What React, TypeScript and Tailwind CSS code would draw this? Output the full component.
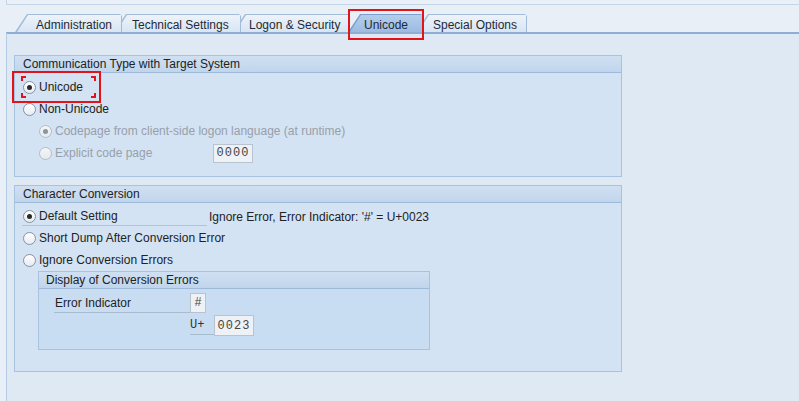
import clsx from "clsx";
import type { ReactNode } from "react";

const tabs = [
  { label: "Administration", w: "w-[107px]", pl: "pl-[20px]", ml: "ml-0", z: "z-50" },
  { label: "Technical Settings", w: "w-[127px]", pl: "pl-[17px]", ml: "-ml-[8px]", z: "z-40" },
  { label: "Logon & Security", w: "w-[117px]", pl: "pl-[15px]", ml: "-ml-[8px]", z: "z-30" },
  { label: "Unicode", w: "w-[75px]", pl: "pl-[15px]", ml: "-ml-[2px]", z: "z-[60]", active: true },
  { label: "Special Options", w: "w-[111px]", pl: "pl-[16px]", ml: "-ml-[7px]", z: "z-20" },
] as const;

function Tab({ t }: { t: (typeof tabs)[number] }) {
  const active = "active" in t && t.active;
  return (
    <div
      className={clsx(
        "relative h-[18px] px-[1px] pt-[1px] [clip-path:polygon(12px_0,calc(100%-2px)_0,100%_2px,100%_100%,0_100%)]",
        t.w,
        t.ml,
        t.z,
        active ? "bg-[#7f9fca]" : "bg-[#a2bbd9]",
      )}
    >
      <div
        className={clsx(
          "flex h-full items-center whitespace-nowrap pt-[2px] text-[12px] text-[#1e2a36] [clip-path:polygon(12px_0,100%_0,100%_100%,1px_100%)]",
          t.pl,
          active
            ? "bg-linear-to-b from-[#b3cdeb] to-[#9dbbe2]"
            : "bg-linear-to-b from-[#edf3fa] to-[#d8e5f3]",
        )}
      >
        {t.label}
      </div>
    </div>
  );
}

function Radio({ checked, disabled }: { checked?: boolean; disabled?: boolean }) {
  return (
    <span
      className={clsx(
        "flex h-[13px] w-[13px] shrink-0 items-center justify-center rounded-full border bg-linear-to-b",
        disabled
          ? "border-[#b3bcc7] from-[#f4f6f8] to-[#e6eaee]"
          : "border-[#8593a5] from-white to-[#e6ecf2]",
      )}
    >
      {checked && (
        <span
          className={clsx("h-[5px] w-[5px] rounded-full", disabled ? "bg-[#8d949c]" : "bg-[#2a2a2a]")}
        />
      )}
    </span>
  );
}

function Option({
  label,
  checked,
  disabled,
  className,
}: {
  label: string;
  checked?: boolean;
  disabled?: boolean;
  className?: string;
}) {
  return (
    <div className={clsx("flex h-[22px] items-center gap-[3px]", className)}>
      <Radio checked={checked} disabled={disabled} />
      <span className={disabled ? "text-[#97a0aa]" : "text-[#222]"}>{label}</span>
    </div>
  );
}

function Field({ value, className }: { value: string; className?: string }) {
  return (
    <div
      className={clsx(
        "flex items-center justify-center border border-[#b7c3cf] bg-[#eef2f6] font-['Liberation_Mono',monospace] text-[12px] tracking-[1px] text-[#444]",
        className,
      )}
    >
      {value}
    </div>
  );
}

function Group({
  title,
  className,
  headerClass,
  children,
}: {
  title: string;
  className?: string;
  headerClass?: string;
  children: ReactNode;
}) {
  return (
    <div className={clsx("flex flex-col border border-[#a9c2df]", className)}>
      <div
        className={clsx(
          "h-[17px] shrink-0 border-b border-[#9fb9d8] bg-linear-to-b from-[#d0e0f2] to-[#c0d5ec] leading-[16px] text-[#222]",
          headerClass,
        )}
      >
        {title}
      </div>
      {children}
    </div>
  );
}

export default function App() {
  return (
    <div className="relative flex h-[401px] w-[799px] flex-col overflow-hidden bg-[#e8eff7] font-['Liberation_Sans',Arial,sans-serif] text-[12px]">
      {/* panel above the tab strip */}
      <div className="ml-[6px] h-[5px] shrink-0 border-b border-l border-[#c6d6e9] bg-[#e9f0f8]" />

      {/* tab strip */}
      <div className="flex h-[27px] shrink-0 items-end pl-[15px]">
        {tabs.map((t) => (
          <Tab key={t.label} t={t} />
        ))}
      </div>

      {/* tab content */}
      <div className="ml-[6px] flex flex-1 flex-col border-l border-t-2 border-l-[#b5cbe6] border-t-[#8eaed6] bg-[#dfe9f4] pl-[7px] pt-[21px]">
        <Group title="Communication Type with Target System" className="h-[122px] w-[608px]" headerClass="pl-[8px]">
          <div className="flex flex-1 flex-col bg-[#d3e3f4] pl-[8px] pt-[3px]">
            <Option label="Unicode" checked />
            <Option label="Non-Unicode" />
            <Option label="Codepage from client-side logon language (at runtime)" checked disabled className="pl-[16px]" />
            <div className="flex items-center">
              <Option label="Explicit code page" disabled className="w-[190px] pl-[16px]" />
              <Field value="0000" className="h-[19px] w-[40px]" />
            </div>
          </div>
        </Group>

        <Group title="Character Conversion" className="mt-[8px] h-[187px] w-[608px]" headerClass="pl-[8px]">
          <div className="flex flex-1 flex-col bg-[#d3e3f4] pt-[2px]">
            <div className="flex items-start">
              <div className="ml-[7px] flex h-[21px] w-[185px] items-center gap-[3px] border-b border-[#b4c4d6] pl-[1px] pt-[2px]">
                <Radio checked />
                <span className="text-[#222]">Default Setting</span>
              </div>
              <span className="ml-[2px] flex h-[22px] items-center pt-[1px] text-[#222]">
                Ignore Error, Error Indicator: '#' = U+0023
              </span>
            </div>
            <Option label="Short Dump After Conversion Error" className="pl-[8px]" />
            <Option label="Ignore Conversion Errors" className="pl-[8px]" />

            <Group title="Display of Conversion Errors" className="ml-[23px] h-[79px] w-[392px]" headerClass="pl-[7px]">
              <div className="flex flex-1 flex-col bg-[#c8ddf2] pt-[4px]">
                <div className="flex items-end">
                  <div className="ml-[15px] flex h-[20px] w-[136px] items-center border-b border-[#a9bccf] pl-[1px] pt-[1px] text-[#222]">
                    Error Indicator
                  </div>
                  <Field value="#" className="h-[20px] w-[16px] tracking-normal" />
                </div>
                <div className="mt-[2px] flex items-start">
                  <div className="ml-[151px] flex h-[20px] w-[24px] items-center border-b border-[#a9bccf] pt-[1px] font-['Liberation_Mono',monospace] text-[#333]">
                    U+
                  </div>
                  <Field value="0023" className="h-[21px] w-[40px]" />
                </div>
              </div>
            </Group>
          </div>
        </Group>
      </div>

      {/* red annotation boxes */}
      <div className="absolute left-[348px] top-[9px] z-[70] h-[31px] w-[76px] border-2 border-[#e3131b]" />
      <div className="absolute left-[12px] top-[71px] z-[70] h-[32px] w-[89px] border-2 border-[#e3131b]" />
      <div className="absolute left-[21px] top-[76px] z-[70] h-[5px] w-[5px] border-l-2 border-t-2 border-[#e3131b]" />
      <div className="absolute left-[91px] top-[76px] z-[70] h-[5px] w-[5px] border-r-2 border-t-2 border-[#e3131b]" />
      <div className="absolute left-[21px] top-[93px] z-[70] h-[5px] w-[5px] border-b-2 border-l-2 border-[#e3131b]" />
      <div className="absolute left-[91px] top-[93px] z-[70] h-[5px] w-[5px] border-b-2 border-r-2 border-[#e3131b]" />
    </div>
  );
}
